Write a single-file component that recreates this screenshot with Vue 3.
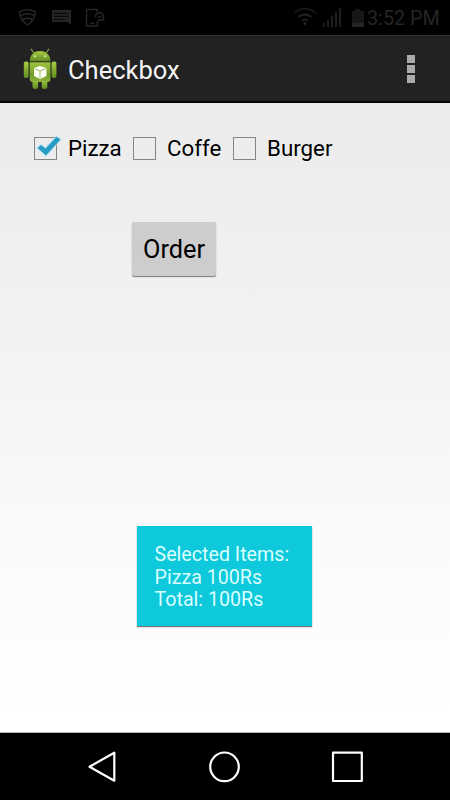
<script setup>
import { reactive } from 'vue'

const items = reactive([
  { name: 'Pizza', key: 'pizza', checked: true },
  { name: 'Coffe', key: 'coffe', checked: false },
  { name: 'Burger', key: 'burger', checked: false },
])
</script>

<template>
  <div class="screen">
    <div class="status">
      <svg class="status-left" viewBox="0 0 120 36" fill="none" stroke="#252525" stroke-width="1.5">
        <path d="M19.5 12Q27.5 7.5 35.5 12Q35 20 27.5 25Q20 20 19.5 12Z M21 15.5Q27.5 12 34 15.5 M23 19.5Q27.5 17 32 19.5" />
        <path d="M52 10H71V25L67.5 22H52Z" fill="#252525" stroke="none" />
        <path d="M54 13.3H69 M54 16.3H69 M54 19.3H65" stroke="#050505" stroke-width="1" />
        <path d="M97 12V9.5H86.5V26H97.5V21 M90 23.5H94" />
        <path d="M95.500 17.500V15.500Q99.500 9.500 103.500 15.500V20H98" />
        <path d="M98 17H101.500" />
      </svg>
      <div class="status-right">
        <svg class="signals" viewBox="0 0 72 36" fill="none" stroke="#222" stroke-width="1.800">
          <path d="M0 13Q11 4.5 22 13" stroke="#161616" />
          <path d="M4.5 17Q11 12 17.5 17 M8 20.5Q11 18.5 14 20.5" />
          <circle cx="11" cy="23.5" r="1.5" fill="#252525" stroke="none" />
          <path d="M30 23V27 M34 20V27 M38 16V27 M42 12V27 M46 8V27" />
          <path d="M58 11H61V9H66V11H70V27H58Z" fill="#171717" stroke="none" />
          <path d="M58 23H70V27H58Z" fill="#252525" stroke="none" />
        </svg>
        <span class="time">3:52 PM</span>
      </div>
    </div>
    <header class="bar">
      <svg class="robot" viewBox="0 0 36 42">
        <defs>
          <linearGradient id="skin" x1="0" y1="0" x2="0" y2="1">
            <stop offset="0" stop-color="#a9cc45" /><stop offset="1" stop-color="#608c20" />
          </linearGradient>
          <linearGradient id="torso" x1="0" y1="0" x2="0" y2="1">
            <stop offset="0" stop-color="#9dc43c" /><stop offset=".65" stop-color="#719e29" /><stop offset="1" stop-color="#8cb43e" />
          </linearGradient>
        </defs>
        <path d="M11.5 4.5L9.2 1.2 M24.5 4.5L26.8 1.2" stroke="#799c37" stroke-width="1.3" stroke-linecap="round" />
        <path d="M7.7 13.2C8 6 13 3 18 3S28.200 6 28.500 13.200Z" fill="url(#skin)" />
        <circle cx="13" cy="8.300" r="1" fill="#e4f2b8" /><circle cx="23.200" cy="8.300" r="1" fill="#e4f2b8" />
        <rect x="1.800" y="13.500" width="4.800" height="16.500" rx="2" fill="url(#skin)" />
        <rect x="29.600" y="13.500" width="4.800" height="16.500" rx="2" fill="url(#skin)" />
        <rect x="10.500" y="30" width="5.600" height="11" rx="2.500" fill="url(#skin)" />
        <rect x="19.700" y="30" width="5.600" height="11" rx="2.500" fill="url(#skin)" />
        <path d="M7.700 14.200H28.500V31Q28.500 34 25.500 34H10.700Q7.700 34 7.700 31Z" fill="url(#torso)" />
        <path d="M12 20L18 18L24.500 20V28L18 31L12 28Z" fill="#fffef5" />
        <path d="M12.500 20.500L18 23L24 20.500 M18 23V30" fill="none" stroke="#9fb86b" stroke-width="1" />
      </svg>
      <h1>Checkbox</h1>
      <button class="more" aria-label="More options"><i></i><i></i><i></i></button>
    </header>
    <main>
      <div class="choices">
        <label v-for="item in items" :key="item.key" :class="['choice', item.key]">
          <input v-model="item.checked" type="checkbox">
          <span class="box">
            <svg v-if="item.checked" viewBox="0 0 32 30">
              <path d="M5.500 14L9 11L13.500 14.500L24.500 2.800L28.500 5.500L14 21.500Z" fill="none" stroke="#b9e5f5" stroke-width="3" opacity=".55" />
              <path d="M5.500 14L9 11L13.500 14.500L24.500 2.800L28.500 5.500L14 21.500Z" fill="#269dc4" />
            </svg>
          </span>
          <span class="name">{{ item.name }}</span>
        </label>
      </div>
      <button class="order">Order</button>
      <div class="toast">
        <div class="heading">Selected Items:</div>
        <div>Pizza 100Rs</div>
        <div>Total: 100Rs</div>
      </div>
    </main>
    <nav>
      <svg viewBox="0 0 450 67" fill="none" stroke="#fff" stroke-width="2.200" stroke-linejoin="round">
        <path d="M89.500 33.700L114.300 19.700V47.700Z" />
        <circle cx="224.500" cy="33.800" r="14.300" />
        <rect x="333" y="19.700" width="28.800" height="28.300" />
      </svg>
    </nav>
  </div>
</template>

<style>
body { margin: 0; }
</style>

<style scoped>
* { box-sizing: border-box; }
.screen { width: 450px; height: 800px; display: flex; flex-direction: column; overflow: hidden; font-family: Roboto, "Liberation Sans", sans-serif; color: #000; }
.status { height: 35px; flex: none; display: flex; justify-content: space-between; background: #000; color: #252525; }
.status-left { width: 120px; height: 36px; }
.status-right { display: flex; width: 156px; }
.signals { width: 72px; height: 36px; flex: none; }
.time { font-size: 19.800px; line-height: 37px; margin-left: 1px; white-space: nowrap; }
.bar { height: 68px; flex: none; display: flex; align-items: flex-start; background: #222; border-top: 1px solid #303030; border-bottom: 2px solid #050505; color: #f3f3f3; }
.robot { width: 36px; height: 42px; margin: 12px 0 0 22px; flex: none; }
h1 { margin: 0 0 0 10px; font-size: 25.500px; font-weight: 400; line-height: 69px; height: 65px; }
.more { display: flex; flex-direction: column; gap: 2px; padding: 0; margin: 19px 35px 0 auto; border: 0; background: none; }
.more i { width: 8px; height: 8px; background: #aaa; }
main { height: 630px; flex: none; display: flex; flex-direction: column; background: linear-gradient(#ebebeb, #f2f2f2 35%, #fafafa 68%, #fff 96%); border-bottom: 1px solid #bbb; }
.choices { display: flex; height: 30px; margin: 30px 0 0 34px; }
.choice { display: flex; align-items: center; flex: none; font-size: 22.300px; line-height: 30px; }
.pizza { width: 99px; }
.coffe { width: 100px; }
input { appearance: none; width: 0; height: 0; margin: 0; }
.box { width: 23px; height: 23px; flex: none; border: 1px solid #858585; margin-right: 11px; }
.box svg { display: block; width: 32px; height: 30px; margin: -4px 0 0 -3px; }
.order { width: 84px; height: 54px; flex: none; margin: 59px 0 0 132px; padding: 0; border: 0; border-radius: 2px; background: #cdcdcd; box-shadow: 0 1px 1px #777; color: #000; font: 25.300px/55px Roboto, "Liberation Sans", sans-serif; }
.toast { width: 175px; height: 100px; flex: none; margin: 250px 0 0 137px; padding: 18px 0 0 17.500px; background: #0ec8db; box-shadow: 0 1px 1px #777; color: #d9ffff; font-size: 19.650px; line-height: 22.500px; white-space: nowrap; }
nav { height: 67px; flex: none; background: #000; }
nav svg { display: block; width: 450px; height: 67px; }
</style>
